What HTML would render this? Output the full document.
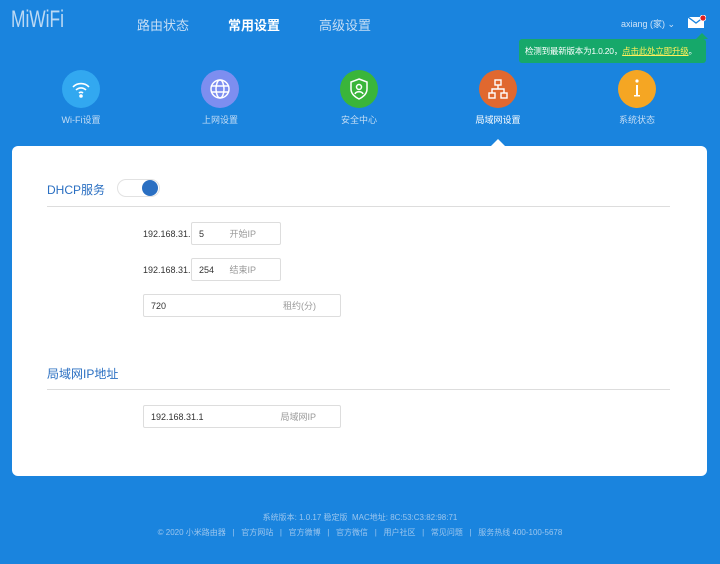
<!DOCTYPE html>
<html><head><meta charset="utf-8"><style>
*{margin:0;padding:0;box-sizing:border-box}
body{width:720px;height:564px;background:#1a84de;font-family:"Liberation Sans","Noto Sans CJK SC",sans-serif;position:relative;overflow:hidden;color:#fff}
.a{position:absolute}
.nav{font-size:13px;top:15px;color:#c6def5}
.ic{position:absolute;top:70px;width:38px;height:38px;border-radius:50%;display:flex;align-items:center;justify-content:center}
.lb{position:absolute;top:113px;font-size:9px;color:#c6def5;width:100px;text-align:center}
.card{left:12px;top:146px;width:695px;height:330px;background:#fff;border-radius:6px}
.t{font-size:12px;color:#2a6fc2}
.ln{height:1px;background:#ddd;left:47px;width:623px}
.in{border:1px solid #ddd;border-radius:2px;height:23px;font-size:9px;color:#333;display:flex;align-items:center;padding-left:7px}
.ph{position:absolute;right:0;color:#999;font-size:9px}
.lab{font-size:9px;color:#333}
.ft{font-size:8px;color:#9cc6ee;width:720px;text-align:center;left:0}
</style></head><body>
<svg class="a" style="left:10px;top:4px" width="60" height="28"><text x="1" y="23" font-family="Liberation Sans" font-size="24" textLength="53" lengthAdjust="spacingAndGlyphs" fill="#d8e8f8" fill-opacity="0.85">MiWiFi</text></svg>
<div class="a nav" style="left:137px">路由状态</div>
<div class="a nav" style="left:228px;color:#fff;font-weight:bold">常用设置</div>
<div class="a nav" style="left:319px">高级设置</div>
<div class="a" style="left:621px;top:17px;font-size:9px;color:#d0e4f7">axiang (家) ⌄</div>
<svg class="a" style="left:688px;top:15px" width="18" height="14"><rect x="0" y="2" width="16" height="11" fill="#fff"/><path d="M0 2l8 6 8-6" stroke="#1a84de" fill="none" stroke-width="1.3"/><circle cx="15" cy="3" r="3" fill="#e02020" stroke="#fff" stroke-width="0.8"/></svg>
<div class="a" style="left:519px;top:39px;width:187px;height:24px;background:#16a86a;border-radius:3px;font-size:8.5px;line-height:24px;padding-left:6px;white-space:nowrap;letter-spacing:-0.2px">检测到最新版本为1.0.20，<span style="color:#ffef5a;text-decoration:underline">点击此处立即升级</span>。</div>
<div class="a" style="left:696px;top:33px;border:6px solid transparent;border-bottom-color:#16a86a;border-top:0"></div>
<div class="ic" style="left:62px;background:#32a8f0"><svg width="20" height="18" fill="none" stroke="#fff" stroke-width="1.6"><path d="M2 7a11 11 0 0 1 16 0M5 10a7 7 0 0 1 10 0M8 13a3 3 0 0 1 4 0"/><circle cx="10" cy="16" r="1" fill="#fff"/></svg></div>
<div class="ic" style="left:201px;background:#7d8ef0"><svg width="22" height="22" fill="none" stroke="#fff" stroke-width="1.5"><circle cx="11" cy="11" r="9"/><ellipse cx="11" cy="11" rx="4" ry="9"/><path d="M2 8h18M2 14h18"/></svg></div>
<div class="ic" style="left:340px;background:#3ab53a"><svg width="20" height="22" fill="none" stroke="#fff" stroke-width="1.5"><path d="M10 1l8 3v7c0 5-4 8-8 10-4-2-8-5-8-10V4z"/><circle cx="10" cy="9" r="2.5"/><path d="M6 16c1-3 7-3 8 0"/></svg></div>
<div class="ic" style="left:479px;background:#e0682f"><svg width="20" height="20" fill="none" stroke="#fff" stroke-width="1.4"><rect x="7" y="1" width="6" height="5"/><rect x="1" y="14" width="6" height="5"/><rect x="13" y="14" width="6" height="5"/><path d="M10 6v4M4 14v-4h12v4"/></svg></div>
<div class="ic" style="left:618px;background:#f5a623"><svg width="10" height="22" fill="#fff"><circle cx="5" cy="3" r="1.6"/><rect x="4" y="7" width="2" height="11"/><rect x="2" y="17" width="6" height="1.5"/></svg></div>
<div class="lb" style="left:31px">Wi-Fi设置</div>
<div class="lb" style="left:170px">上网设置</div>
<div class="lb" style="left:309px">安全中心</div>
<div class="lb" style="left:448px;color:#fff">局域网设置</div>
<div class="lb" style="left:587px">系统状态</div>
<div class="a card"></div>
<div class="a" style="left:491px;top:139px;border:7px solid transparent;border-bottom-color:#fff;border-top:0"></div>
<div class="a t" style="left:47px;top:181px">DHCP服务</div>
<div class="a" style="left:117px;top:179px;width:43px;height:18px;border:1px solid #e2e2e2;border-radius:9px;background:#fff"><div class="a" style="right:1px;top:0px;width:16px;height:16px;border-radius:50%;background:#2a6fc2"></div></div>
<div class="a ln" style="top:206px"></div>
<div class="a lab" style="left:143px;top:229px">192.168.31.</div>
<div class="a in" style="left:191px;top:222px;width:90px">5<span class="ph" style="right:24px">开始IP</span></div>
<div class="a lab" style="left:143px;top:265px">192.168.31.</div>
<div class="a in" style="left:191px;top:258px;width:90px">254<span class="ph" style="right:24px">结束IP</span></div>
<div class="a in" style="left:143px;top:294px;width:198px">720<span class="ph" style="right:24px">租约(分)</span></div>
<div class="a t" style="left:47px;top:365px">局域网IP地址</div>
<div class="a ln" style="top:389px"></div>
<div class="a in" style="left:143px;top:405px;width:198px">192.168.31.1<span class="ph" style="right:24px">局域网IP</span></div>
<div class="a ft" style="top:512px">系统版本: 1.0.17 稳定版&nbsp; MAC地址: 8C:53:C3:82:98:71</div>
<div class="a ft" style="top:527px">© 2020 小米路由器 &nbsp; | &nbsp; 官方网站 &nbsp; | &nbsp; 官方微博 &nbsp; | &nbsp; 官方微信 &nbsp; | &nbsp; 用户社区 &nbsp; | &nbsp; 常见问题 &nbsp; | &nbsp; 服务热线 400-100-5678</div>
</body></html>
